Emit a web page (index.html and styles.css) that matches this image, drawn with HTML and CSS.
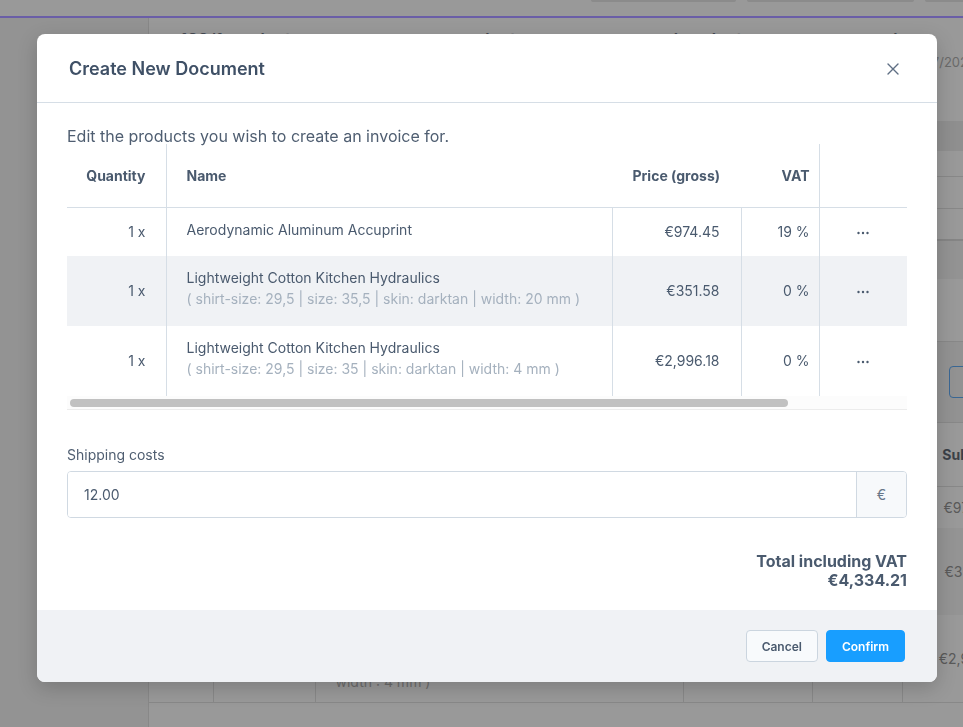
FILE: index.html
```html
<!DOCTYPE html>
<html lang="en">
<head>
<meta charset="utf-8">
<title>Create New Document</title>
<link rel="stylesheet" href="styles.css">
</head>
<body>
<div class="app">
  <div class="topbar">
    <span class="top-btn w1"></span>
    <span class="top-btn w2"></span>
    <span class="top-btn w3"></span>
  </div>
  <div class="accent"></div>
  <div class="layout">
    <aside class="sidebar"></aside>
    <main class="main">
      <div class="page-head">
        <div class="page-title">189/1 products @ company.com, products @ company.com (products @ company.com)</div>
        <div class="page-meta"><span>Created 06/07/2023</span></div>
      </div>
      <div class="bg-band"></div>
      <div class="bg-row r1"></div>
      <div class="bg-row r2"></div>
      <div class="bg-row r3"></div>
      <div class="bg-shade"></div>
      <div class="bg-block"></div>
      <div class="bg-toolbar"><span class="bg-btn"></span></div>
      <table class="bg-table">
        <colgroup>
          <col class="bc1"><col class="bc2"><col class="bc3"><col class="bc4"><col class="bc5"><col class="bc6">
        </colgroup>
        <tr class="bh"><td></td><td></td><td></td><td></td><td></td><td class="bsum">Subtotal</td></tr>
        <tr class="b1"><td></td><td></td><td></td><td></td><td></td><td class="bnum">€974.45</td></tr>
        <tr class="b2"><td></td><td></td><td></td><td></td><td></td><td class="bnum">€351.58</td></tr>
        <tr class="b3"><td></td><td></td><td class="bname">Lightweight Cotton Kitchen Hydraulics<br>( shirt-size: 29,5 | size: 35 | skin: darktan |<br>width : 4 mm )</td><td></td><td></td><td class="bnum">€2,996.18</td></tr>
      </table>
    </main>
  </div>
</div>

<div class="modal" role="dialog" aria-labelledby="modal-title">
  <header class="modal-header">
    <h2 id="modal-title" class="modal-title">Create New Document</h2>
    <button class="close-btn" aria-label="Close">
      <svg width="12" height="12" viewBox="0 0 12 12"><path d="M1 1L11 11M11 1L1 11" stroke="#5f6f84" stroke-width="1.4" stroke-linecap="round" fill="none"/></svg>
    </button>
  </header>
  <div class="modal-body">
    <p class="intro">Edit the products you wish to create an invoice for.</p>
    <div class="table-wrap">
      <table class="products">
        <colgroup>
          <col class="c-qty"><col class="c-name"><col class="c-price"><col class="c-vat"><col class="c-act">
        </colgroup>
        <thead>
          <tr>
            <th class="qty">Quantity</th>
            <th class="name">Name</th>
            <th class="price nob">Price (gross)</th>
            <th class="vat">VAT</th>
            <th class="act"></th>
          </tr>
        </thead>
        <tbody>
          <tr class="short">
            <td class="qty">1 x</td>
            <td class="name"><div class="pname">Aerodynamic Aluminum Accuprint</div></td>
            <td class="price">€974.45</td>
            <td class="vat">19 %</td>
            <td class="act"><svg class="dots" width="12" height="4" viewBox="0 0 12 4"><circle cx="1.5" cy="2" r="1.2"/><circle cx="6" cy="2" r="1.2"/><circle cx="10.5" cy="2" r="1.2"/></svg></td>
          </tr>
          <tr class="tall shaded">
            <td class="qty">1 x</td>
            <td class="name"><div class="pname">Lightweight Cotton Kitchen Hydraulics</div><div class="pvar">( shirt-size: 29,5 | size: 35,5 | skin: darktan | width: 20 mm )</div></td>
            <td class="price">€351.58</td>
            <td class="vat">0 %</td>
            <td class="act"><svg class="dots" width="12" height="4" viewBox="0 0 12 4"><circle cx="1.5" cy="2" r="1.2"/><circle cx="6" cy="2" r="1.2"/><circle cx="10.5" cy="2" r="1.2"/></svg></td>
          </tr>
          <tr class="tall">
            <td class="qty">1 x</td>
            <td class="name"><div class="pname">Lightweight Cotton Kitchen Hydraulics</div><div class="pvar">( shirt-size: 29,5 | size: 35 | skin: darktan | width: 4 mm )</div></td>
            <td class="price">€2,996.18</td>
            <td class="vat">0 %</td>
            <td class="act"><svg class="dots" width="12" height="4" viewBox="0 0 12 4"><circle cx="1.5" cy="2" r="1.2"/><circle cx="6" cy="2" r="1.2"/><circle cx="10.5" cy="2" r="1.2"/></svg></td>
          </tr>
        </tbody>
      </table>
    </div>
    <div class="hscroll"><div class="hthumb"></div></div>

    <label class="field-label" for="shipping">Shipping costs</label>
    <div class="input-group">
      <input id="shipping" class="input" type="text" value="12.00">
      <span class="addon">€</span>
    </div>

    <div class="total">
      <div>Total including VAT</div>
      <div>€4,334.21</div>
    </div>
  </div>
  <footer class="modal-footer">
    <button class="btn btn-cancel">Cancel</button>
    <button class="btn btn-confirm">Confirm</button>
  </footer>
</div>
</body>
</html>
```

FILE: styles.css
```css
* { box-sizing: border-box; }

html, body {
  margin: 0;
  padding: 0;
  height: 100%;
}

body {
  font-family: Inter, "Noto Sans", "Liberation Sans", sans-serif;
  background: #999999;
  overflow: hidden;
}

/* ---------- dimmed background app ---------- */
.app {
  height: 727px;
  display: flex;
  flex-direction: column;
  overflow: hidden;
}

.topbar {
  height: 16px;
  flex: none;
  display: flex;
  justify-content: flex-end;
  gap: 11px;
  margin-right: -22px;
  background: #999999;
}

.top-btn {
  height: 2px;
  background: #8b8b8b;
  border-radius: 0 0 3px 3px;
}
.top-btn.w1 { width: 145px; }
.top-btn.w2 { width: 167px; }
.top-btn.w3 { width: 60px; }

.accent {
  height: 2px;
  flex: none;
  background: #6a5ea7;
}

.layout {
  flex: 1;
  display: flex;
  min-height: 0;
}

.sidebar {
  width: 149px;
  flex: none;
  background: #939393;
  border-right: 1px solid #888888;
}

.main {
  flex: 1;
  min-width: 0;
  overflow: hidden;
  background: #999999;
}

.page-head {
  height: 103px;
  padding: 10px 0 0 31px;
}

.page-title {
  font-size: 17px;
  line-height: 24px;
  font-weight: 600;
  color: #454a52;
  white-space: nowrap;
}

.page-meta {
  display: flex;
  justify-content: flex-end;
  margin-top: 0;
  margin-right: -13px;
  font-size: 13px;
  line-height: 20px;
  color: #6a6a6a;
  white-space: nowrap;
}

.bg-band { height: 30px; background: #8f8f8f; }
.bg-row { border-bottom: 1px solid #888888; }
.bg-row.r1 { height: 26px; }
.bg-row.r2 { height: 32px; }
.bg-row.r3 { height: 32px; border-bottom: 2px solid #858585; }
.bg-shade { height: 38px; background: #939393; }
.bg-block { height: 63px; border-bottom: 1px solid #888888; }

.bg-toolbar {
  height: 81px;
  background: #929292;
  border-bottom: 1px solid #888888;
  padding: 24px 0 0 800px;
}

.bg-btn {
  display: block;
  width: 120px;
  height: 32px;
  border: 1.5px solid #3a6794;
  border-radius: 4px;
}

.bg-table {
  border-collapse: collapse;
  table-layout: fixed;
  width: 891px;
  font-size: 14px;
  color: #5a5a5a;
}
.bg-table td {
  border-right: 1px solid #888888;
  padding: 0;
}
.bc1 { width: 64px; }
.bc2 { width: 102px; }
.bc3 { width: 368px; }
.bc4 { width: 129px; }
.bc5 { width: 90px; }
.bc6 { width: 138px; }
.bg-table .bh { height: 63px; border-bottom: 1px solid #888888; }
.bg-table .b1 { height: 42px; }
.bg-table .b2 { height: 87px; background: #949494; }
.bg-table .b3 { height: 87px; border-bottom: 1px solid #888888; }
.bg-table .bsum { text-align: center; font-weight: 700; color: #3b4048; }
.bg-table .bnum { text-align: center; }
.bg-table .bname { padding-left: 20px; line-height: 23px; color: #6c6c6c; }

/* ---------- modal ---------- */
.modal {
  position: fixed;
  left: 37px;
  top: 34px;
  width: 900px;
  height: 648px;
  background: #ffffff;
  border-radius: 8px;
  overflow: hidden;
  box-shadow: 0 6px 20px rgba(0, 0, 0, 0.18);
  display: flex;
  flex-direction: column;
  color: #4a5a6e;
}

.modal-header {
  height: 69px;
  flex: none;
  display: flex;
  align-items: center;
  justify-content: space-between;
  padding: 2px 32px 0 32px;
  border-bottom: 1px solid #d6dee6;
}

.modal-title {
  margin: 0;
  font-size: 18px;
  line-height: 24px;
  font-weight: 600;
  color: #3f5066;
}

.close-btn {
  width: 12px;
  height: 12px;
  padding: 0;
  margin-right: 6px;
  border: 0;
  background: none;
  display: flex;
  cursor: pointer;
}

.modal-body {
  flex: 1;
  padding: 23px 30px 0 30px;
}

.intro {
  margin: 0 0 -2px 0;
  font-size: 16px;
  line-height: 20px;
  color: #4f5e71;
}

.table-wrap {
  width: 840px;
  overflow: hidden;
}

.products {
  width: 840px;
  border-collapse: collapse;
  table-layout: fixed;
  font-size: 14px;
  color: #4a5a6e;
}

.c-qty { width: 99px; }
.c-name { width: 446px; }
.c-price { width: 129px; }
.c-vat { width: 78px; }
.c-act { width: 88px; }

.products th {
  height: 63px;
  font-size: 14px;
  font-weight: 700;
  color: #4a5a6e;
  border-bottom: 1px solid #d6dee6;
  border-right: 1px solid #d6dee6;
  vertical-align: middle;
  padding: 1px 0 0 0;
}
.products th.nob,
.products th.name { border-right: 0; }
.products th.act { border-right: 0; }

.products td {
  border-right: 1px solid #d6dee6;
  vertical-align: middle;
  padding: 0;
  line-height: 20px;
}
.products td.act { border-right: 0; text-align: center; }

.products tr.short { height: 49px; }
.products tr.tall { height: 70px; }
.products tr.shaded { background: #f0f2f5; }

.qty { text-align: right; padding-right: 20px !important; }
.name { text-align: left; padding-left: 20px !important; }
.price { text-align: right; padding-right: 21px !important; }
.vat { text-align: right; padding-right: 9px !important; }

.products td.name {
  vertical-align: top;
  padding-top: 11px !important;
}

.pname { line-height: 21px; }
.pvar {
  line-height: 22px;
  color: #a5b1be;
  white-space: nowrap;
}

.dots { fill: #4a5a6e; display: inline-block; vertical-align: middle; }

.hscroll {
  width: 840px;
  height: 14px;
  padding: 3px 0 0 3px;
  border-bottom: 1px solid #ececec;
  background: #fcfcfc;
}
.hthumb {
  width: 718px;
  height: 8px;
  border-radius: 4px;
  background: #c1c1c1;
}

.field-label {
  display: block;
  margin-top: 35px;
  font-size: 14px;
  line-height: 20px;
  color: #4f5e71;
}

.input-group {
  margin-top: 6px;
  width: 840px;
  height: 47px;
  display: flex;
  border: 1px solid #d0d9e2;
  border-radius: 4px;
  overflow: hidden;
}

.input {
  flex: 1;
  min-width: 0;
  border: 0;
  outline: none;
  padding: 0 16px;
  font-family: inherit;
  font-size: 14px;
  color: #4a5a6e;
  background: #ffffff;
}

.addon {
  width: 50px;
  flex: none;
  display: flex;
  align-items: center;
  justify-content: center;
  border-left: 1px solid #d0d9e2;
  background: #f7f9fb;
  font-size: 14px;
  color: #687789;
}

.total {
  margin-top: 34px;
  text-align: right;
  font-size: 16px;
  line-height: 19px;
  font-weight: 700;
  color: #4a5a6e;
}

.modal-footer {
  height: 72px;
  flex: none;
  display: flex;
  justify-content: flex-end;
  align-items: flex-start;
  gap: 8px;
  padding: 20px 32px 0 32px;
  background: #f0f2f5;
}

.btn {
  height: 32px;
  padding: 0 15px;
  border-radius: 4px;
  font-family: inherit;
  font-size: 12px;
  font-weight: 600;
  cursor: pointer;
}

.btn-cancel {
  background: #f8fafc;
  border: 1px solid #cbd5df;
  color: #4a5a6e;
}

.btn-confirm {
  background: #189eff;
  border: 1px solid #189eff;
  color: #ffffff;
}
```
